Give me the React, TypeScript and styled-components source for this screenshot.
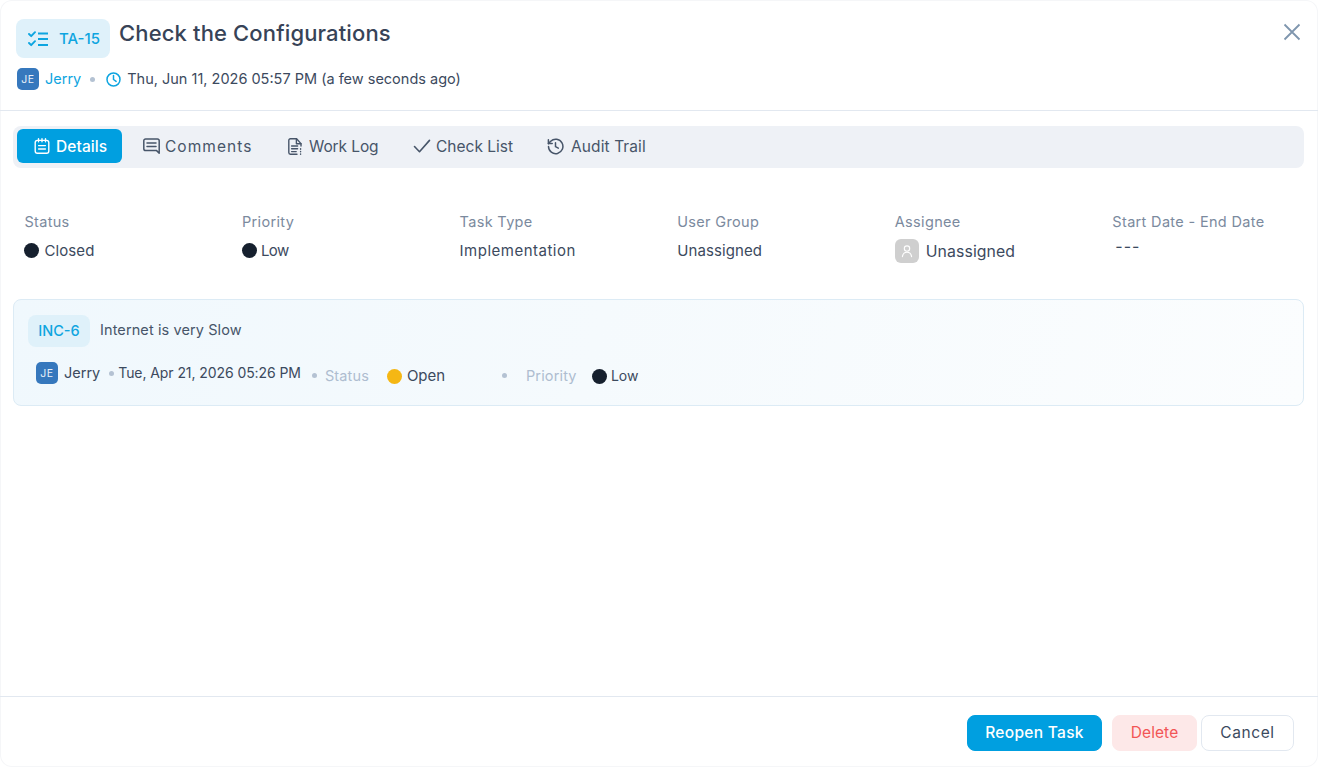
import React from "react";
import styled, { createGlobalStyle } from "styled-components";

const Global = createGlobalStyle`
  html, body { margin: 0; padding: 0; background: #ffffff; }
  body { font-family: Inter, "Liberation Sans", sans-serif; color: #334155; }
  * { box-sizing: border-box; }
`;

const Modal = styled.div`
  width: 1318px; height: 767px; background: #fff; border-radius: 12px;
  box-shadow: inset 0 0 0 1px #f5f6f8;
  display: flex; flex-direction: column; overflow: hidden;
`;
const Header = styled.header`
  height: 111px; padding: 19px 16px 0; border-bottom: 1px solid #e2e8f0; position: relative; flex: none;
`;
const TitleRow = styled.div`display: flex; align-items: flex-start; gap: 9px;`;
const Badge = styled.div<{ $w: number; $h: number; $size: number; $gap?: number; $pl?: number; $pb?: number }>`
  width: ${p => p.$w}px; height: ${p => p.$h}px; background: #dff1fa; border-radius: 8px;
  display: flex; align-items: center; justify-content: center; gap: ${p => p.$gap ?? 0}px;
  padding-left: ${p => p.$pl ?? 0}px; padding-bottom: ${p => p.$pb ?? 0}px;
  color: #0ea5e0; font-size: ${p => p.$size}px; font-weight: 500; flex: none;
`;
const Title = styled.h1`
  margin: 0; font-size: 22px; line-height: 28px; font-weight: 500; color: #374357; letter-spacing: 0.14px;
`;
const MetaRow = styled.div`display: flex; align-items: center; margin: 10px 0 0 1px; height: 22px;`;
const Avatar = styled.span`
  width: 22px; height: 22px; border-radius: 5px; background: #3678bd; color: #e8f0f8;
  display: flex; align-items: center; justify-content: center; font-size: 10.5px; flex: none; letter-spacing: .5px;
  align-self: flex-start;
`;
const JerryLink = styled.span`color: #0ea5e0; font-size: 14.5px; margin: -1px 0 0 6px; line-height: 22px;`;
const Dot = styled.span<{ $l: number; $r: number; $up?: number }>`
  width: 5px; height: 5px; border-radius: 50%; background: #b4c2d3; flex: none;
  margin-left: ${p => p.$l}px; margin-right: ${p => p.$r}px; margin-top: ${p => -(p.$up ?? 0)}px;
`;
const ClockWrap = styled.span`color: #0ea5e0; display: flex;`;
const MetaText = styled.span`font-size: 14.5px; color: #3c4a5e; margin: -1px 0 0 6px; white-space: nowrap;`;
const CloseBtn = styled.button`
  position: absolute; top: 21px; right: 15px; width: 22px; height: 22px; padding: 0; border: 0; background: none; color: #7f96ae;
  display: flex; align-items: center; justify-content: center;
`;
const Body = styled.main`flex: 1; padding: 15px 14px 0 13px; overflow: hidden;`;
const Tabs = styled.nav`
  height: 42px; background: #eef1f6; border-radius: 8px; display: flex; gap: 3px; padding: 3px 4px 0;
`;
const Tab = styled.div<{ $active?: boolean; $w: number; $pl: number; $gap: number; $ls: number }>`
  height: 34px; width: ${p => p.$w}px; flex: none; border-radius: 6px; display: flex; align-items: center;
  padding-left: ${p => p.$pl}px; gap: ${p => p.$gap}px; letter-spacing: ${p => p.$ls}px; white-space: nowrap;
  font-size: 15.5px; font-weight: ${p => (p.$active ? 500 : 400)};
  background: ${p => (p.$active ? "#009fe0" : "transparent")};
  color: ${p => (p.$active ? "#fff" : "#475569")};
`;
const InfoGrid = styled.section`
  display: grid; grid-template-columns: repeat(6, 217.6px); margin: 44px 0 0 11.4px;
`;
const Field = styled.div`display: flex; flex-direction: column;`;
const Label = styled.div`font-size: 14.5px; line-height: 20px; color: #7b8a9e; letter-spacing: .33px; white-space: nowrap;`;
const Value = styled.div<{ $ls?: number; $gap?: number }>`
  display: flex; align-items: center; gap: ${p => p.$gap ?? 5}px; height: 24px; margin-top: 6px; letter-spacing: ${p => p.$ls ?? 0.1}px;
  font-size: 15px; color: #3c4a5e; white-space: nowrap;
`;
const StatusDot = styled.span<{ $c: string }>`
  width: 15px; height: 15px; border-radius: 50%; background: ${p => p.$c}; flex: none;
`;
const GreyAvatar = styled.span`
  width: 24px; height: 24px; border-radius: 6px; background: #cfcfcf; color: #fff; margin-top: 1px;
  display: flex; align-items: center; justify-content: center; margin-right: 2px; flex: none;
`;
const AssigneeName = styled.span`font-size: 15.8px; margin-top: 2px;`;
const Dashes = styled.span`padding-left: 3px; font-size: 16px; letter-spacing: 1px; margin-top: -8px;`;
const Card = styled.section`
  margin-top: 37px; height: 107px; border: 1px solid #dcebf5; border-radius: 8px;
  background: linear-gradient(105deg, #f0f8fd 0%, #f5fafd 45%, #fbfdfe 100%);
  padding: 15px 14px;
`;
const CardTop = styled.div`display: flex; align-items: flex-start; gap: 10px;`;
const CardTitle = styled.div`font-size: 14.5px; line-height: 30px; color: #475569; letter-spacing: .1px;`;
const CardRow = styled.div`display: flex; align-items: center; margin: 15px 0 0 8px; height: 28px; font-size: 14.5px; white-space: nowrap;`;
const CardName = styled.span`margin: -7px 0 0 6px; color: #3c4a5e;`;
const CardDate = styled.span`color: #3c4a5e; margin-top: -7px; font-size: 14px; letter-spacing: -0.08px;`;
const Muted = styled.span<{ $w: number }>`color: #aebdd0; width: ${p => p.$w}px; margin-right: 17px; letter-spacing: .15px; margin-top: -2px;`;
const CardVal = styled.span<{ $w?: number; $ml?: number; $size?: number }>`
  color: #3c4a5e; margin-left: ${p => p.$ml ?? 5}px; font-size: ${p => p.$size ?? 15}px; margin-top: -1px; ${p => (p.$w ? `width: ${p.$w}px;` : "")}
`;
const Footer = styled.footer`
  height: 71px; flex: none; border-top: 1px solid #e2e8f0; display: flex; justify-content: flex-end; padding: 18px 24px 0 0; gap: 4px;
`;
const Button = styled.button<{ $bg: string; $c: string; $w: number; $border?: string; $mr?: number; $ls: number; $wt: number }>`
  width: ${p => p.$w}px; height: 36px; border-radius: 8px; font: ${p => p.$wt} 15.5px Inter, sans-serif; letter-spacing: ${p => p.$ls}px;
  background: ${p => p.$bg}; color: ${p => p.$c}; border: 1px solid ${p => p.$border ?? p.$bg};
  margin-right: ${p => p.$mr ?? 0}px; padding: 0 0 2px;
`;

const Ico = ({ w, h, sw = 1.5, children }: { w: number; h: number; sw?: number; children: React.ReactNode }) => (
  <svg width={w} height={h} viewBox={`0 0 ${w} ${h}`} fill="none" stroke="currentColor" strokeWidth={sw} strokeLinecap="round" strokeLinejoin="round" style={{ flex: "none" }}>{children}</svg>
);
const TaskIcon = () => (
  <Ico w={20} h={16} sw={1.9}>
    <path d="M1 3l2.2 2.2L7 1.2M1 12l2.2 2.2L7 10.2" />
    <path strokeLinecap="butt" d="M10 2.5h10M10 8h10M10 14h10" />
  </Ico>
);
const ClockIcon = () => (
  <Ico w={15} h={15} sw={1.5}><circle cx="7.5" cy="7.5" r="6.5" /><path d="M7.5 3.6v3.9l2.6 1.9" /></Ico>
);
const NoteIcon = () => (
  <Ico w={16} h={16} sw={1.4}>
    <rect x="1.2" y="2.4" width="13.6" height="12.9" rx="2.2" />
    <path d="M4.5.8v3M8 .8v3M11.5.8v3M4.6 7.6h6.8M4.6 11h6.8" />
  </Ico>
);
const CommentIcon = () => (
  <Ico w={17} h={16} sw={1.5}>
    <path d="M2.6 1h11.8a1.8 1.8 0 0 1 1.8 1.8v12.4l-2.6-2.6H2.6A1.8 1.8 0 0 1 .8 10.8v-8A1.8 1.8 0 0 1 2.6 1z" />
    <path d="M4 5h9M4 8.6h9" />
  </Ico>
);
const LogIcon = () => (
  <Ico w={14} h={17} sw={1.4}>
    <path d="M13 8V5.6L8.6.8H2.4A1.6 1.6 0 0 0 .8 2.4v12.2a1.6 1.6 0 0 0 1.6 1.6H9" />
    <path d="M8.4.9v4.9H13M3.6 8h6M3.6 10.8h6M3.6 13.6h4.6" />
    <path d="M12.6 10.8v.4M12.6 13.4v.4M12.6 16v.2" />
  </Ico>
);
const CheckIcon = () => <Ico w={18} h={14} sw={1.6}><path d="M1.5 7.5l5 5.2L16.5 1.4" /></Ico>;
const AuditIcon = () => (
  <Ico w={17} h={17} sw={1.5}>
    <path d="M1.5 8.5a7.2 7.2 0 1 0 2.2-5.2L1.4 5.6" /><path d="M1.4 1.8v3.8h3.8M8.5 4.7v4l2.8 1.5" />
  </Ico>
);
const UserIcon = () => (
  <Ico w={14} h={14} sw={1.1}><circle cx="7" cy="4.6" r="2.7" /><path d="M2.4 12.6c.5-3 2.2-4.3 4.6-4.3s4.1 1.3 4.6 4.3" /></Ico>
);
const CloseIcon = () => (
  <svg width="18" height="18" viewBox="0 0 18 18" fill="none" stroke="currentColor" strokeWidth="1.8"><path d="M1.5 1.5l15 15M16.5 1.5l-15 15" /></svg>
);

const TABS: { label: string; w: number; pl: number; gap: number; ls: number; icon: React.ReactNode; active?: boolean }[] = [
  { label: "Details", w: 105, pl: 17, gap: 6, ls: 0.1, icon: <NoteIcon />, active: true },
  { label: "Comments", w: 142, pl: 18, gap: 5, ls: 1.05, icon: <CommentIcon /> },
  { label: "Work Log", w: 123, pl: 18, gap: 7, ls: -0.1, icon: <LogIcon /> },
  { label: "Check List", w: 131, pl: 17, gap: 5, ls: 0, icon: <CheckIcon /> },
  { label: "Audit Trail", w: 130, pl: 17, gap: 7, ls: 0.1, icon: <AuditIcon /> },
];

export default function App() {
  return (
    <Modal>
      <Global />
      <Header>
        <TitleRow>
          <Badge $w={94} $h={39} $size={15} $gap={11} $pl={2}><TaskIcon />TA-15</Badge>
          <Title>Check the Configurations</Title>
        </TitleRow>
        <MetaRow>
          <Avatar>JE</Avatar>
          <JerryLink>Jerry</JerryLink>
          <Dot $l={9} $r={11} />
          <ClockWrap><ClockIcon /></ClockWrap>
          <MetaText>Thu, Jun 11, 2026 05:57 PM (a few seconds ago)</MetaText>
        </MetaRow>
        <CloseBtn aria-label="Close"><CloseIcon /></CloseBtn>
      </Header>
      <Body>
        <Tabs>
          {TABS.map(t => (
            <Tab key={t.label} $active={t.active} $w={t.w} $pl={t.pl} $gap={t.gap} $ls={t.ls}>{t.icon}{t.label}</Tab>
          ))}
        </Tabs>
        <InfoGrid>
          <Field><Label>Status</Label><Value><StatusDot $c="#16202e" />Closed</Value></Field>
          <Field><Label>Priority</Label><Value $ls={-0.6} $gap={4}><StatusDot $c="#16202e" />Low</Value></Field>
          <Field><Label>Task Type</Label><Value $ls={0.5}>Implementation</Value></Field>
          <Field><Label>User Group</Label><Value>Unassigned</Value></Field>
          <Field><Label>Assignee</Label><Value><GreyAvatar><UserIcon /></GreyAvatar><AssigneeName>Unassigned</AssigneeName></Value></Field>
          <Field><Label>Start Date - End Date</Label><Value><Dashes>---</Dashes></Value></Field>
        </InfoGrid>
        <Card>
          <CardTop>
            <Badge $w={62} $h={32} $size={14.5} $pb={2}>INC-6</Badge>
            <CardTitle>Internet is very Slow</CardTitle>
          </CardTop>
          <CardRow>
            <Avatar>JE</Avatar>
            <CardName>Jerry</CardName>
            <Dot $l={9} $r={4} $up={6} />
            <CardDate>Tue, Apr 21, 2026 05:26 PM</CardDate>
            <Dot $l={11} $r={8} $up={2} />
            <Muted $w={45}>Status</Muted>
            <StatusDot $c="#f5b714" />
            <CardVal $w={95}>Open</CardVal>
            <Dot $l={0} $r={19} $up={2} />
            <Muted $w={49}>Priority</Muted>
            <StatusDot $c="#16202e" />
            <CardVal $ml={4} $size={14}>Low</CardVal>
          </CardRow>
        </Card>
      </Body>
      <Footer>
        <Button $bg="#009fe0" $c="#fff" $w={135} $mr={6} $ls={0.3} $wt={450}>Reopen Task</Button>
        <Button $bg="#fde8e8" $c="#f25555" $w={85} $ls={0.1} $wt={400}>Delete</Button>
        <Button $bg="#fff" $c="#3c4a5e" $w={93} $border="#e2e8f0" $ls={0.6} $wt={400}>Cancel</Button>
      </Footer>
    </Modal>
  );
}
